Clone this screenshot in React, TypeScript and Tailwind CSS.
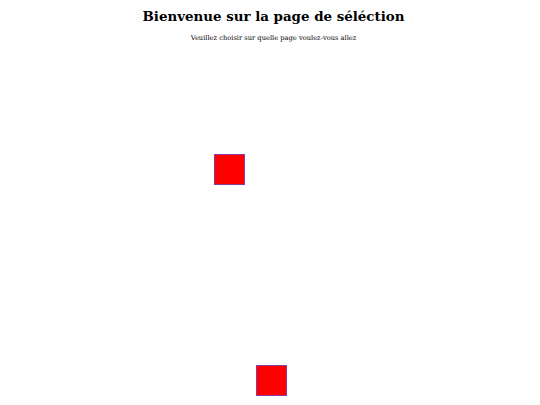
export default function App() {
  return (
    <div className="w-[540px] h-[405px] overflow-hidden bg-white text-black" style={{ fontFamily: '"DejaVu Serif", serif' }}>
      <div className="h-[48px] flex flex-col items-center pt-[8px] pl-[7px]">
        <h1 className="text-[13.4px] leading-[17px] font-bold">Bienvenue sur la page de séléction</h1>
        <p className="text-[6.7px] leading-[9px] mt-[9px]">Veuillez choisir sur quelle page voulez-vous allez</p>
      </div>
      <div className="ml-[214px] mt-[106px] w-[31px] h-[31px] bg-[#ff0000] border border-[#8e3a9e]" />
      <div className="ml-[256px] mt-[180px] w-[31px] h-[31px] bg-[#ff0000] border border-[#8e3a9e]" />
    </div>
  );
}
